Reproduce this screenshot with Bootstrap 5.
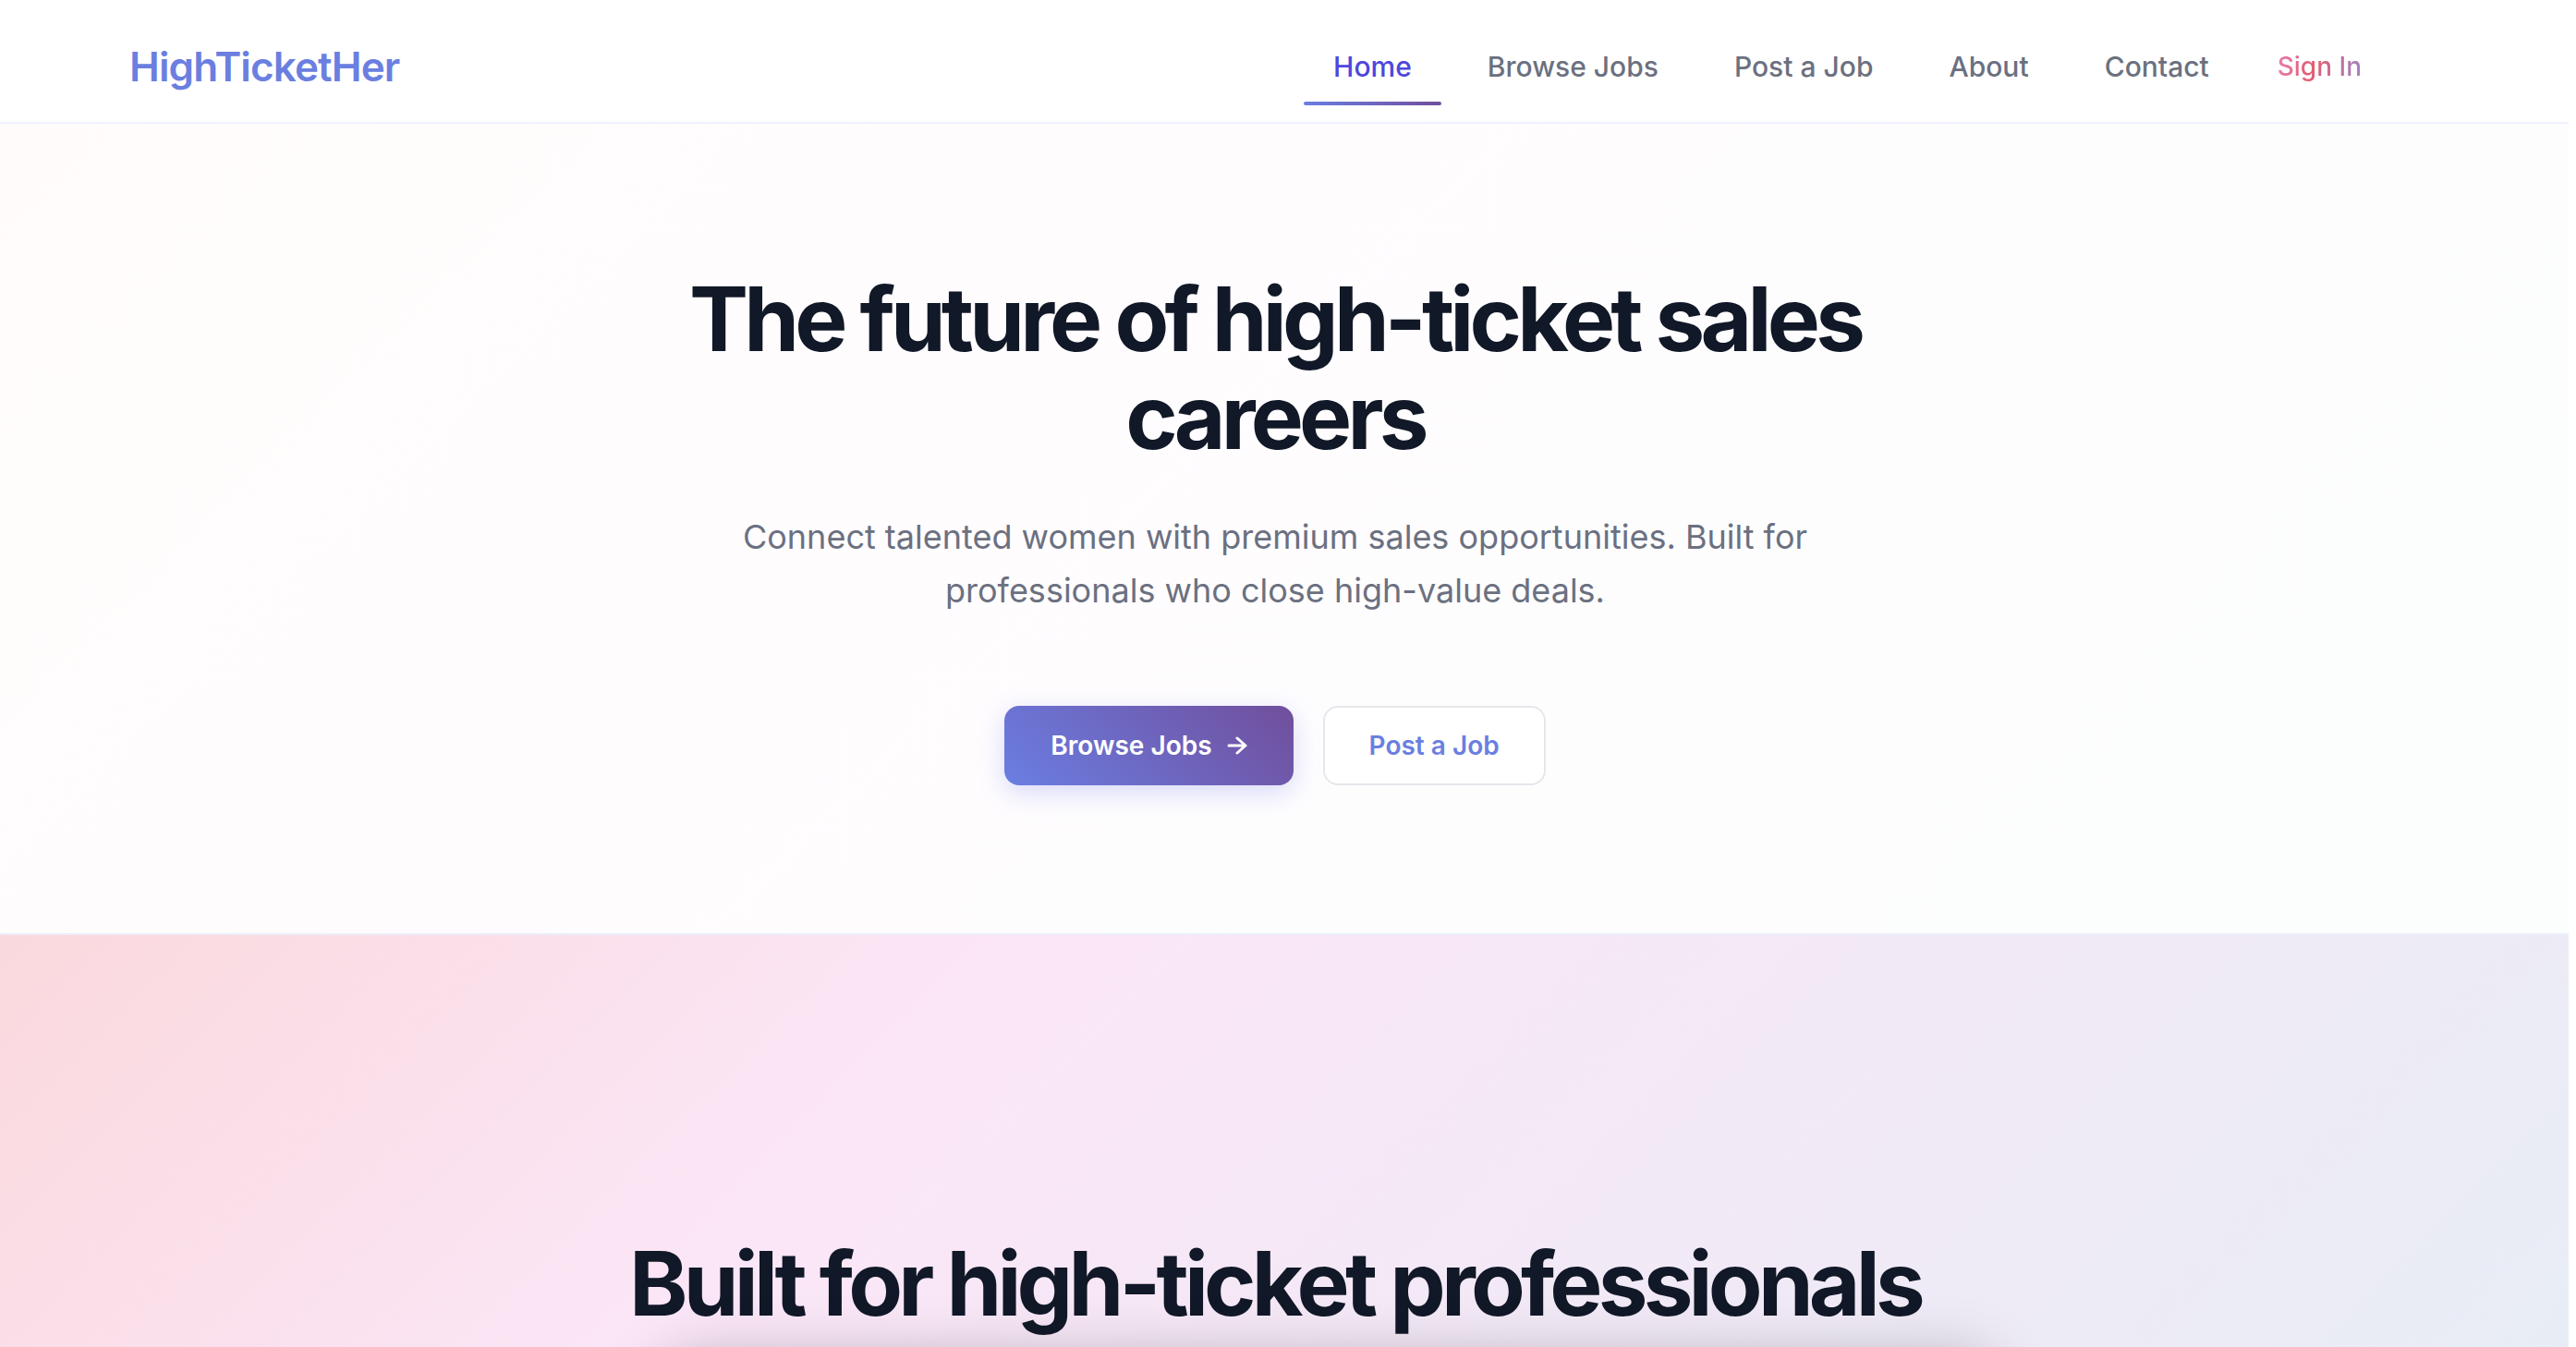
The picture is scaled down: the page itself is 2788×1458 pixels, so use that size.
<!DOCTYPE html>
<html lang="en">
<head>
<meta charset="utf-8">
<meta name="viewport" content="width=device-width, initial-scale=1">
<title>HighTicketHer</title>
<link href="https://cdn.jsdelivr.net/npm/bootstrap@5.3.0/dist/css/bootstrap.min.css" rel="stylesheet">
<style>
body{font-family:Inter,"Liberation Sans",sans-serif;color:#111827;background:#fff}
.page{padding-right:8px}
.site-nav{padding:32px 140px 20px;border-bottom:2px solid #eef2ff;background:#fff}
.site-nav .navbar-brand{font-size:44px;line-height:60px;font-weight:600;letter-spacing:-0.02em;color:#6b7fe0;padding:0;margin:0}
.nav-items{gap:18px}
.site-nav .nav-link{font-size:30px;line-height:48px;font-weight:500;color:#6b7080;padding:16px 32px}
.site-nav .nav-link.active{color:#4f46dd;position:relative}
.site-nav .nav-link.active::after{content:"";position:absolute;left:0;right:0;bottom:-2px;height:4px;border-radius:2px;background:linear-gradient(90deg,#6a7ee2,#714e9c)}
.sign-in{font-size:28px;line-height:48px;font-weight:500;margin:0 84px 0 42px;text-decoration:none;color:transparent;background:linear-gradient(100deg,#e87fb4,#e35d70 42%,#9a84c8);-webkit-background-clip:text;background-clip:text}
.hero-band{padding:158px 20px 160px 0;border-bottom:2px solid #ecf0fc;background:linear-gradient(135deg,#fffbfa 0,#fffdfc 14%,#fffcfe 30%,#fefdfe 60%,#fcfdfd 85%)}
.headline{font-size:96px;line-height:106px;font-weight:700;letter-spacing:-0.05em;color:#111827;margin:0}
.hero-band .headline{max-width:1400px}
.hero-copy{font-size:36px;line-height:58px;color:#6b7080;max-width:1200px;margin:48px 0 96px}
.cta-row{gap:32px}
.cta{font-size:28px;line-height:42px;font-weight:600;padding:20px 48px;border:2px solid transparent;border-radius:16px}
.cta-main,.cta-main:hover{color:#fff;background:linear-gradient(45deg,#6a7ee2,#714e9c) border-box;box-shadow:0 8px 28px rgba(102,110,234,.25)}
.cta-plain{color:#6b7fe0;background:#fff;border-color:#e5e7eb}
.cta svg{width:22px;height:22px}
.built{padding:324px 20px 160px 0;background:linear-gradient(135deg,#fad9dd 0,#fbe6f7 800px,#e8edf5 2280px)}
.preview-card{width:1440px;height:800px;margin:28px 0 0 114px;border-radius:32px;background:#fff;box-shadow:0 0 64px rgba(0,0,0,.25)}
</style>
</head>
<body>
<div class="page vh-100 overflow-hidden">
<nav class="navbar site-nav d-flex justify-content-between">
<a class="navbar-brand" href="#">HighTicketHer</a>
<div class="d-flex align-items-center">
<ul class="nav nav-items">
<li><a class="nav-link active" aria-current="page" href="#">Home</a></li>
<li><a class="nav-link" href="#">Browse Jobs</a></li>
<li><a class="nav-link" href="#">Post a Job</a></li>
<li><a class="nav-link" href="#">About</a></li>
<li><a class="nav-link" href="#">Contact</a></li>
</ul>
<a class="sign-in" href="#">Sign In</a>
</div>
</nav>
<main>
<section class="hero-band d-flex flex-column align-items-center text-center">
<h1 class="headline">The future of high-ticket sales careers</h1>
<p class="hero-copy">Connect talented women with premium sales opportunities. Built for professionals who close high-value deals.</p>
<div class="d-flex cta-row">
<button type="button" class="btn cta cta-main d-flex align-items-center gap-3">Browse Jobs
<svg viewBox="0 0 22 22" fill="none" stroke="currentColor" stroke-width="3" stroke-linecap="round" stroke-linejoin="round" aria-hidden="true"><path d="M2 11h18M11 3l9 8-9 8"/></svg></button>
<button type="button" class="btn cta cta-plain">Post a Job</button>
</div>
</section>
<section class="built d-flex flex-column align-items-center text-center">
<h2 class="headline">Built for high-ticket professionals</h2>
<div class="preview-card"></div>
</section>
</main>
</div>
<script src="https://cdn.jsdelivr.net/npm/bootstrap@5.3.0/dist/js/bootstrap.bundle.min.js"></script>
</body>
</html>
